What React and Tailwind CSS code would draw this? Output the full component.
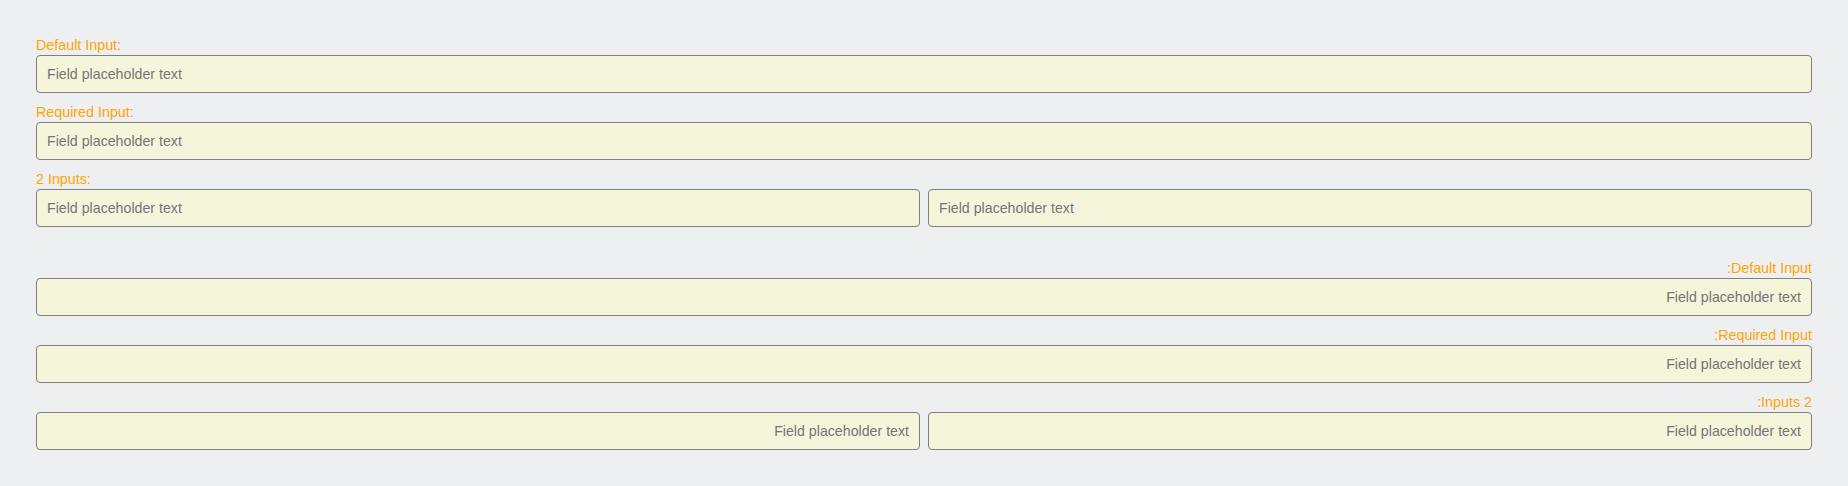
import React from "react";

const inputCls =
  "block w-full min-w-0 h-[38px] border border-[#808080] rounded-[4px] bg-[#f5f5dc] px-[10px] text-[14.2px] text-[#333333] placeholder:text-[#757575] outline-none font-['Liberation_Sans',Arial,sans-serif]";

function Field({ label, children }) {
  return (
    <div className="mb-[9px]">
      <label className="block h-[20px] leading-[20px] text-[14.3px] text-[#ffa500]">
        {label}
      </label>
      {children}
    </div>
  );
}

function Section({ dir }) {
  return (
    <div dir={dir} className="flex flex-col">
      <Field label="Default Input:">
        <input className={inputCls} placeholder="Field placeholder text" />
      </Field>
      <Field label="Required Input:">
        <input className={inputCls} placeholder="Field placeholder text" required />
      </Field>
      <Field label="2 Inputs:">
        <div className="flex gap-[8px]">
          <div className="flex-1 min-w-0">
            <input className={inputCls} placeholder="Field placeholder text" />
          </div>
          <div className="flex-1 min-w-0">
            <input className={inputCls} placeholder="Field placeholder text" />
          </div>
        </div>
      </Field>
    </div>
  );
}

export default function App() {
  return (
    <div className="min-h-screen w-full bg-[#eeeff1] px-[36px] pt-[35px] flex flex-col gap-[22px] font-['Liberation_Sans',Arial,sans-serif]">
      <Section dir="ltr" />
      <Section dir="rtl" />
    </div>
  );
}
